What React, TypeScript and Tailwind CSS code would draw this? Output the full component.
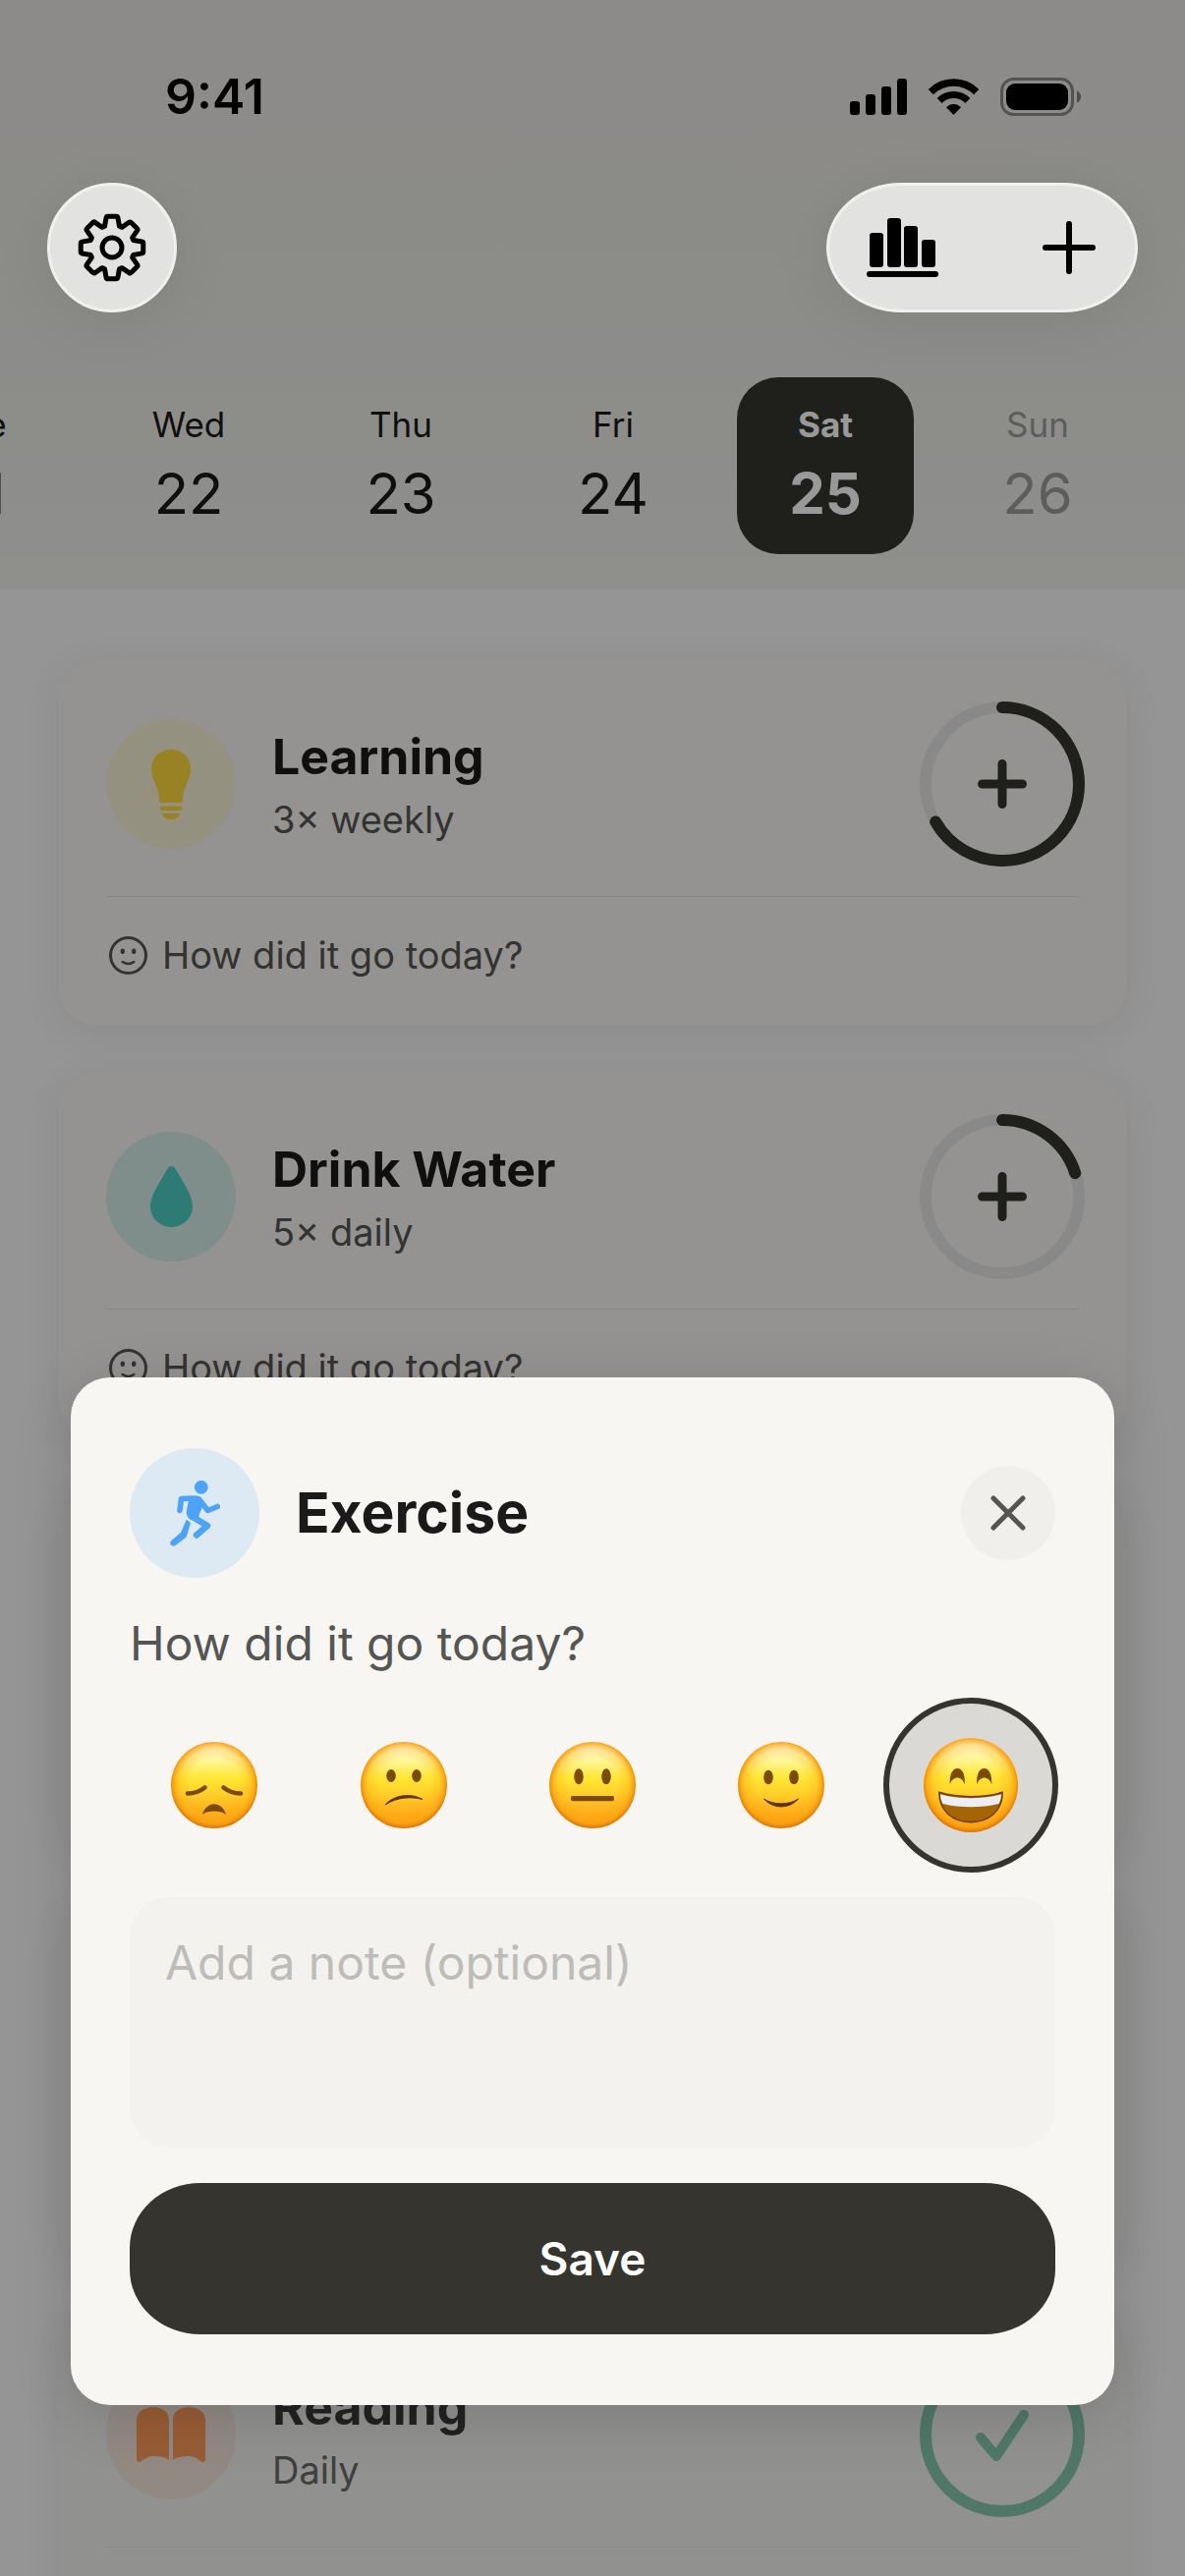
import React, { useState } from 'react'

type Tone = 'yellow' | 'teal' | 'blue' | 'purple' | 'orange'

interface Habit {
  id: string
  name: string
  schedule: string
  tone: Tone
  done: number
  target: number
}

const habits: Habit[] = [
  { id: 'learning', name: 'Learning', schedule: '3× weekly', tone: 'yellow', done: 2, target: 3 },
  { id: 'water', name: 'Drink Water', schedule: '5× daily', tone: 'teal', done: 1, target: 5 },
  { id: 'exercise', name: 'Exercise', schedule: 'Daily', tone: 'blue', done: 1, target: 1 },
  { id: 'meditate', name: 'Meditate', schedule: 'Daily', tone: 'purple', done: 1, target: 1 },
  { id: 'reading', name: 'Reading', schedule: 'Daily', tone: 'orange', done: 1, target: 1 },
]

const days = [
  { label: 'Tue', date: 21 },
  { label: 'Wed', date: 22 },
  { label: 'Thu', date: 23 },
  { label: 'Fri', date: 24 },
  { label: 'Sat', date: 25 },
  { label: 'Sun', date: 26, future: true },
]

const toneClasses: Record<Tone, string> = {
  yellow: 'bg-[#ffd93d]/15 text-[#ffd93d]',
  teal: 'bg-[#4ecdc4]/20 text-[#4ecdc4]',
  blue: 'bg-[#4da3f7]/15 text-[#4da3f7]',
  purple: 'bg-[#a78bfa]/15 text-[#a78bfa]',
  orange: 'bg-[#ff8c42]/15 text-[#ff8c42]',
}

// Eight teeth around the origin, drawn as one closed outline
const gearPath =
  Array.from({ length: 8 }, (_, i) => {
    const point = (radius: number, deg: number) => {
      const a = ((i * 45 + deg - 90) * Math.PI) / 180
      return `${(radius * Math.cos(a)).toFixed(2)} ${(radius * Math.sin(a)).toFixed(2)}`
    }
    return `${i === 0 ? 'M' : 'L'}${point(23, -19)}L${point(31, -11)}Q${point(32.4, -10)} ${point(32, -7)}L${point(32, 7)}Q${point(32.4, 10)} ${point(31, 11)}L${point(23, 19)}`
  }).join('') + 'Z'

function GearIcon() {
  return (
    <svg width="70" height="70" viewBox="-35 -35 70 70" fill="none" stroke="currentColor" strokeWidth="5" strokeLinejoin="round">
      <path d={gearPath} />
      <circle r="10" />
    </svg>
  )
}

function ChartIcon() {
  return (
    <svg width="73" height="60" viewBox="0 0 73 60" fill="currentColor">
      <rect x="3" y="15" width="14" height="35" rx="3" />
      <rect x="21" y="0" width="14" height="50" rx="3" />
      <rect x="38" y="8" width="14" height="42" rx="3" />
      <rect x="56" y="22" width="14" height="28" rx="3" />
      <rect x="0" y="54" width="73" height="6" rx="3" />
    </svg>
  )
}

function StatusIcons() {
  return (
    <div className="flex items-center gap-[22px]">
      <svg width="58" height="37" viewBox="0 0 58 37">
        <rect x="0" y="23" width="10" height="14" rx="3" />
        <rect x="16" y="16" width="10" height="21" rx="3" />
        <rect x="32" y="8" width="10" height="29" rx="3" />
        <rect x="48" y="0" width="10" height="37" rx="3" />
      </svg>
      <svg width="51" height="37" viewBox="0 0 51 37" fill="none" stroke="black">
        <path d="M2.3 13.6A32.8 32.8 0 0 1 48.7 13.6" strokeWidth="7.4" />
        <path d="M11.1 22.4A20.4 20.4 0 0 1 39.9 22.4" strokeWidth="7" />
        <path d="M25.5 37L18 29.3C22 24.8 29 24.8 33 29.3Z" fill="black" stroke="none" />
      </svg>
      <svg width="82" height="39" viewBox="0 0 82 39">
        <rect x="1.5" y="1.5" width="72" height="36" rx="12" fill="none" stroke="black" strokeOpacity="0.4" strokeWidth="3" />
        <rect x="6" y="6" width="63" height="27" rx="9" />
        <path d="M78 13.5C80.500 14.500 82 16.700 82 19.500S80.500 24.500 78 25.500Z" fillOpacity="0.45" />
      </svg>
    </div>
  )
}

function RunnerIcon() {
  return (
    <svg width="51" height="67" viewBox="0 0 51 67" fill="none" stroke="currentColor" strokeLinecap="round" strokeLinejoin="round">
      <circle cx="31.800" cy="6.800" r="6.900" fill="currentColor" stroke="none" />
      <path d="M10 30.500L11.500 18.500L24 18" strokeWidth="5.600" />
      <path d="M20 16L28 15.500C33 17.500 34.500 22 33 27L30 34L29 38L22 40.500C17.500 38 16 34 17 30L19 20Z" fill="currentColor" stroke="none" />
      <path d="M29.500 19L38.500 30.500L48.300 26.500" strokeWidth="5.600" />
      <path d="M21.500 36L38 46L27 55.500" strokeWidth="6.400" />
      <path d="M16.800 39.500L21 43L17.500 55Q17 57 15.500 58.500L5.200 66.300Q1.500 67.500 0.300 64.500Q0 62.500 1.500 61L11 53Z" fill="currentColor" stroke="none" />
    </svg>
  )
}

function HabitIcon({ tone }: { tone: Tone }) {
  if (tone === 'yellow') {
    return (
      <svg width="40" height="71" viewBox="0 0 40 71" fill="currentColor">
        <path d="M20 0C8.500 0 0 8 0 19C0 32 8 38 8 51Q8 54 11 54H29Q32 54 32 51C32 38 40 32 40 19C40 8 31.500 0 20 0Z" />
        <rect x="8.500" y="57.500" width="23" height="4.500" rx="2.200" />
        <path d="M11 65H29C28 69 25 71 20 71S12 69 11 65Z" />
      </svg>
    )
  }
  if (tone === 'teal' || tone === 'purple') {
    return (
      <svg width="43" height="62" viewBox="0 0 43 62" fill="currentColor">
        <path d="M21.500 0C23.500 0 25 1.500 26 3.500C34 17 43 30 43 41C43 53 33 62 21.500 62S0 53 0 41C0 30 9 17 17 3.500C18 1.500 19.500 0 21.500 0Z" />
      </svg>
    )
  }
  if (tone === 'orange') {
    return (
      <svg width="70" height="56" viewBox="0 0 70 56" fill="currentColor">
        <path d="M0 13C0 5 8 0 17 0S33 5 33 13V54C29 51 24 50 18 50S9 52 5 55C2 57 0 56 0 53Z" />
        <path d="M70 13C70 5 62 0 53 0S37 5 37 13V54C41 51 46 50 52 50S61 52 65 55C68 57 70 56 70 53Z" />
      </svg>
    )
  }
  return <RunnerIcon />
}

function HabitBadge({ tone }: { tone: Tone }) {
  return (
    <div className={`flex size-[132px] shrink-0 items-center justify-center rounded-full ${toneClasses[tone]}`}>
      <HabitIcon tone={tone} />
    </div>
  )
}

function SmileyIcon() {
  return (
    <svg width="39" height="39" viewBox="-19.500 -19.500 39 39" fill="none" stroke="currentColor" strokeWidth="3" strokeLinecap="round">
      <circle r="18" />
      <ellipse cx="-5.700" cy="-4.300" rx="2.200" ry="2.800" fill="currentColor" stroke="none" />
      <ellipse cx="5.700" cy="-4.300" rx="2.200" ry="2.800" fill="currentColor" stroke="none" />
      <path d="M-5.800 6.500Q0 10.500 5.800 6.500" strokeWidth="2.600" />
    </svg>
  )
}

function ProgressButton({ habit }: { habit: Habit }) {
  const complete = habit.done >= habit.target
  const length = 2 * Math.PI * 78

  return (
    <button
      type="button"
      aria-label={`Log ${habit.name}`}
      className={`size-[156px] shrink-0 ${complete ? 'text-[#74c3a5]' : 'text-[#35342e]'}`}
    >
      <svg className="size-full overflow-visible" viewBox="-78 -78 156 156" fill="none" stroke="currentColor" strokeWidth="12" strokeLinecap="round">
        <circle r="78" stroke="#e5e5e5" />
        <circle
          r="78"
          transform="rotate(-90)"
          strokeDasharray={complete ? undefined : `${(length * habit.done) / habit.target} ${length}`}
        />
        {complete ? (
          <path d="M-22 3L-6 22L22 -20" strokeWidth="10" strokeLinejoin="round" />
        ) : (
          <path d="M-20.500 0H20.500M0 -20.500V20.500" strokeWidth="9" />
        )}
      </svg>
    </button>
  )
}

function HabitCard({ habit }: { habit: Habit }) {
  const complete = habit.done >= habit.target

  return (
    <article
      className={`rounded-[40px] p-12 shadow-[0_8px_40px_rgba(0,0,0,0.07)] ${
        complete ? 'bg-[#f2f2f1]' : 'bg-[#f7f6f2]'
      }`}
    >
      <div className={complete ? 'opacity-85' : ''}>
        <div className="flex items-center gap-9">
          <HabitBadge tone={habit.tone} />
          <div className="flex min-w-0 flex-1 flex-col gap-[10px] pl-px">
            <h2 className="truncate text-[50px] leading-[62px] font-bold text-[#1a1a1a]">{habit.name}</h2>
            <p className="text-[38px] leading-[46px] text-[#555553]">{habit.schedule}</p>
          </div>
          <ProgressButton habit={habit} />
        </div>
        <button
          type="button"
          className="mt-9 flex w-full items-center gap-[15px] border-t border-[#e2e2de] pt-9 pl-[3px] text-[38px] leading-[47px] text-[#555553]"
        >
          <SmileyIcon />
          How did it go today?
        </button>
      </div>
    </article>
  )
}

const ink = '#7c4a03'

const moods = [
  {
    label: 'Awful',
    face: (
      <>
        <path d="M-27 8.500C-20 8.500 -14 6 -9.500 2.500M27 8.500C20 8.500 14 6 9.500 2.500" fill="none" stroke={ink} strokeWidth="4.600" strokeLinecap="round" />
        <path d="M-12 29.700C-10 23 -5 19.300 0 19.300S10 23 12 29.700C5 25.500 -5 25.500 -12 29.700Z" fill={ink} />
      </>
    ),
  },
  {
    label: 'Bad',
    face: (
      <>
        <ellipse cx="-13" cy="-9.500" rx="4.800" ry="6.500" fill={ink} />
        <ellipse cx="13" cy="-9.500" rx="4.800" ry="6.500" fill={ink} />
        <path d="M-19 20C-10 10 7 7.500 19 14.500C8 11.500 -7 12 -19 20Z" fill="#5d3200" stroke="#5d3200" strokeLinejoin="round" />
      </>
    ),
  },
  {
    label: 'Okay',
    face: (
      <>
        <ellipse cx="-14" cy="-8.700" rx="4.800" ry="8" fill={ink} />
        <ellipse cx="14" cy="-8.700" rx="4.800" ry="8" fill={ink} />
        <rect x="-22" y="11" width="44" height="5.200" rx="2" fill={ink} />
      </>
    ),
  },
  {
    label: 'Good',
    face: (
      <>
        <ellipse cx="-13" cy="-8" rx="4.800" ry="7.300" fill={ink} />
        <ellipse cx="13" cy="-8" rx="4.800" ry="7.300" fill={ink} />
        <path d="M-17.500 14C-8 24.500 8 24.500 17.500 14C8 20.500 -8 20.500 -17.500 14Z" fill="#5d3200" stroke="#5d3200" strokeLinejoin="round" />
      </>
    ),
  },
  {
    label: 'Great',
    face: (
      <>
        <path d="M-19.500 -0.500C-20 -10 -17 -15.500 -12.500 -15.500S-5 -10 -5.700 -0.500C-8 -9 -17 -9 -19.500 -0.500Z" fill={ink} />
        <path d="M5.700 -0.500C5 -10 8 -15.500 12.500 -15.500S20 -10 19.500 -0.500C17 -9 8 -9 5.700 -0.500Z" fill={ink} />
        <path d="M-29.500 6.700C-12 12 12 12 29.500 6.700C29.500 24 17 34.500 0 34.500S-29.500 24 -29.500 6.700Z" fill="#a56505" stroke="#6b3a00" strokeWidth="1.400" strokeLinejoin="round" />
        <path d="M-28.500 8.500C-12 13.500 12 13.500 28.500 8.500C28.500 12 27.500 15 26 17.500C10 21.500 -10 21.500 -26 17.500C-27.500 15 -28.500 12 -28.500 8.500Z" fill="#eceef4" />
      </>
    ),
  },
]

function MoodPicker() {
  const [selected, setSelected] = useState('Great')

  return (
    <div className="flex gap-5">
      {moods.map((mood) => {
        const active = mood.label === selected
        return (
          <button
            key={mood.label}
            type="button"
            aria-label={mood.label}
            aria-pressed={active}
            onClick={() => setSelected(mood.label)}
            className="flex h-[156px] min-w-0 flex-1 items-center justify-center"
          >
            <span
              className={`flex size-[178px] shrink-0 items-center justify-center rounded-full ${
                active ? 'border-[6px] border-[#35342e] bg-[#dad9d5]' : ''
              }`}
            >
              <svg className={active ? 'size-24' : 'size-[88px]'} viewBox="-44 -44 88 88">
                <circle r="44" fill="url(#face-base)" />
                <circle r="44" fill="url(#face-rim)" />
                {mood.face}
              </svg>
            </span>
          </button>
        )
      })}
    </div>
  )
}

function FaceGradients() {
  return (
    <svg className="absolute size-0" aria-hidden="true">
      <defs>
        <linearGradient id="face-base" x1="0" y1="0" x2="0" y2="1">
          <stop offset="0.050" stopColor="#fffbe6" />
          <stop offset="0.200" stopColor="#fff7a0" />
          <stop offset="0.420" stopColor="#ffe733" />
          <stop offset="0.600" stopColor="#ffd02a" />
          <stop offset="0.800" stopColor="#ffb01c" />
          <stop offset="1" stopColor="#f59410" />
        </linearGradient>
        <radialGradient id="face-rim" cx="0.5" cy="0.480" r="0.520">
          <stop offset="0.550" stopColor="#ffab12" stopOpacity="0" />
          <stop offset="0.780" stopColor="#ffae14" stopOpacity="0.350" />
          <stop offset="0.900" stopColor="#fba010" stopOpacity="0.850" />
          <stop offset="1" stopColor="#d87408" />
        </radialGradient>
      </defs>
    </svg>
  )
}

function CheckInDialog() {
  const [note, setNote] = useState('')

  return (
    <div className="absolute inset-0 z-10 flex flex-col justify-end bg-black/40 px-[72px] pb-[174px]">
      <section
        role="dialog"
        aria-labelledby="dialog-title"
        className="relative flex flex-col gap-9 rounded-[40px] bg-[#f7f6f2] px-[60px] py-[72px] shadow-[0_12px_60px_rgba(0,0,0,0.15)]"
      >
        <FaceGradients />
        <header className="flex items-center gap-9">
          <HabitBadge tone="blue" />
          <h2 id="dialog-title" className="flex-1 pl-px text-[57px] leading-[72px] font-bold text-[#1a1a1a]">
            Exercise
          </h2>
          <button type="button" aria-label="Close" className="flex size-24 items-center justify-center rounded-full bg-[#f0efec] text-[#555553]">
            <svg width="36" height="36" viewBox="0 0 36 36" fill="none" stroke="currentColor" strokeWidth="5" strokeLinecap="round">
              <path d="M3 3L33 33M33 3L3 33" />
            </svg>
          </button>
        </header>
        <p className="text-[48px] leading-[61px] text-[#555553]">How did it go today?</p>
        <MoodPicker />
        <textarea
          aria-label="Note"
          placeholder="Add a note (optional)"
          value={note}
          onChange={(e) => setNote(e.target.value)}
          className="block h-[255px] w-full resize-none rounded-[40px] bg-[#f3f2ee] p-9 text-[48px] leading-[61px] text-[#1a1a1a] outline-none placeholder:text-[#bdbcb9]"
        />
        <button type="button" className="h-[154px] rounded-[72px/66px] bg-[#35342e] text-[46px] font-semibold text-white">
          Save
        </button>
      </section>
    </div>
  )
}

const glass = 'border-[3px] border-[#f0f0ec] bg-[#e2e2e0] shadow-[0_8px_60px_rgba(0,0,0,0.08)]'

export default function App() {
  return (
    <div className="relative h-screen overflow-hidden bg-[#f8f8f8] font-['Inter','Liberation_Sans',sans-serif]">
      <header className="bg-linear-to-b from-[#ebe8e4] via-[#e9e9e5] to-[#eeeeea] pb-9">
        <div className="relative z-20 flex h-[186px] items-center justify-between pt-[10px] pr-[106px] pl-[168px]">
          <span className="text-[50px] font-semibold">9:41</span>
          <StatusIcons />
        </div>
        <nav className="relative z-20 flex justify-between px-12">
          <button type="button" aria-label="Settings" className={`flex size-[132px] items-center justify-center rounded-full ${glass}`}>
            <GearIcon />
          </button>
          <div className={`flex h-[132px] items-center gap-[106px] rounded-[76px/66px] pr-10 pl-[38px] ${glass}`}>
            <button type="button" aria-label="Statistics">
              <ChartIcon />
            </button>
            <button type="button" aria-label="Add habit">
              <svg width="54" height="54" viewBox="0 0 54 54" fill="none" stroke="currentColor" strokeWidth="6" strokeLinecap="round">
                <path d="M3 27H51M27 3V51" />
              </svg>
            </button>
          </div>
        </nav>
        <div className="mt-[66px] flex justify-end gap-9 overflow-hidden pr-[60px]">
          {days.map((day) => {
            const today = day.label === 'Sat'
            return (
              <button
                key={day.label}
                type="button"
                className={`flex size-[180px] shrink-0 flex-col items-center justify-center gap-3 rounded-[42px] ${
                  today ? 'bg-[#35342e] text-white' : day.future ? 'text-[#9b9b98]' : 'text-[#1a1a1a]'
                }`}
              >
                <span className={`text-[35px] leading-[44px] ${today ? 'font-bold' : ''}`}>{day.label}</span>
                <span className={`text-[58px] leading-[72px] ${today ? 'font-bold' : ''}`}>{day.date}</span>
              </button>
            )
          })}
        </div>
      </header>
      <main className="flex flex-col gap-12 px-[60px] pt-[72px]">
        {habits.map((habit) => (
          <HabitCard key={habit.id} habit={habit} />
        ))}
      </main>
      <CheckInDialog />
    </div>
  )
}
